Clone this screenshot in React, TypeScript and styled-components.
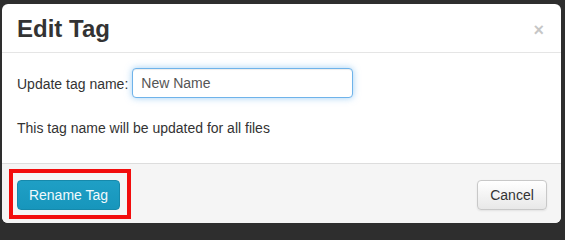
import React, { FC, useEffect, useRef } from 'react';
import styled, { createGlobalStyle } from 'styled-components';

const GlobalStyle = createGlobalStyle`
  html, body {
    margin: 0;
    padding: 0;
    background: #2e2e2e;
    overflow: hidden;
  }
  body {
    font-family: 'Liberation Sans', Arial, sans-serif;
    font-size: 14px;
    color: #333;
  }
`;

const Backdrop = styled.div`
  height: 229px;
  box-sizing: border-box;
  padding: 4px 4px 6px 2px;
`;

const Modal = styled.div`
  width: 559px;
  height: 219px;
  background: #fff;
  border-radius: 6px;
  display: flex;
  flex-direction: column;
  overflow: hidden;
`;

const Header = styled.div`
  height: 48px;
  padding: 0 15px;
  display: flex;
  align-items: center;
  justify-content: space-between;
  border-bottom: 1px solid #e5e5e5;
`;

const Title = styled.h3`
  margin: 2px 0 0 0;
  font-size: 24px;
  font-weight: bold;
  line-height: 30px;
  color: #333;
`;

const Close = styled.button`
  border: 0;
  background: none;
  padding: 0;
  margin: 4px 2px 0 0;
  font-family: 'Liberation Sans', Arial, sans-serif;
  font-size: 18px;
  font-weight: bold;
  line-height: 18px;
  color: #000;
  opacity: 0.22;
  cursor: pointer;
`;

const Body = styled.div`
  flex: 1;
  padding: 15px 15px 0 15px;
`;

const FieldRow = styled.div`
  display: flex;
  align-items: center;
  gap: 4px;
`;

const Label = styled.label`
  line-height: 20px;
  padding-top: 2px;
`;

const TextInput = styled.input`
  box-sizing: border-box;
  width: 221px;
  height: 30px;
  padding: 4px 8px;
  font-family: 'Liberation Sans', Arial, sans-serif;
  font-size: 14px;
  color: #555;
  border: 1px solid #6fb3ea;
  border-radius: 4px;
  box-shadow: inset 0 1px 1px rgba(0, 0, 0, 0.075), 0 0 7px rgba(82, 168, 236, 0.55);
  outline: none;
  caret-color: #000;
`;

const Note = styled.p`
  margin: 20px 0 0 0;
  line-height: 20px;
`;

const Footer = styled.div`
  height: 60px;
  box-sizing: border-box;
  padding: 16px 14px 0 15px;
  background: #f5f5f5;
  border-top: 1px solid #dddddd;
  display: flex;
  align-items: flex-start;
  justify-content: space-between;
`;

const Highlight = styled.span`
  position: relative;
  display: inline-flex;

  &::after {
    content: '';
    position: absolute;
    left: -8px;
    right: -11px;
    top: -11px;
    bottom: -9px;
    border: 4px solid #f20d0d;
    pointer-events: none;
  }
`;

const Button = styled.button<{ $primary?: boolean }>`
  box-sizing: border-box;
  height: 30px;
  padding: 0 4px;
  white-space: nowrap;
  font-family: 'Liberation Sans', Arial, sans-serif;
  font-size: 14px;
  line-height: 28px;
  border-radius: 4px;
  cursor: pointer;
  color: ${(p) => (p.$primary ? '#f2fafd' : '#333')};
  background: ${(p) =>
    p.$primary
      ? 'linear-gradient(#1f9fc5, #1796bc)'
      : 'linear-gradient(#ffffff, #e8e8e8)'};
  border: 1px solid ${(p) => (p.$primary ? '#1689ab' : '#c8c8c8')};
  box-shadow: ${(p) =>
    p.$primary ? 'none' : 'inset 0 1px 0 rgba(255,255,255,0.3), 0 1px 2px rgba(0,0,0,0.08)'};
`;

const RenameButton = styled(Button)`
  width: 103px;
`;

const CancelButton = styled(Button)`
  width: 70px;
`;

const App: FC = () => {
  const inputRef = useRef<HTMLInputElement>(null);

  useEffect(() => {
    const el = inputRef.current;
    if (!el) return;
    el.focus();
    el.setSelectionRange(el.value.length, el.value.length);
  }, []);

  return (
    <>
      <GlobalStyle />
      <Backdrop>
        <Modal>
          <Header>
            <Title>Edit Tag</Title>
            <Close aria-label='Close'>×</Close>
          </Header>
          <Body>
            <FieldRow>
              <Label htmlFor='tag-name'>Update tag name:</Label>
              <TextInput id='tag-name' ref={inputRef} defaultValue='New Name' />
            </FieldRow>
            <Note>This tag name will be updated for all files</Note>
          </Body>
          <Footer>
            <Highlight>
              <RenameButton $primary>Rename Tag</RenameButton>
            </Highlight>
            <CancelButton>Cancel</CancelButton>
          </Footer>
        </Modal>
      </Backdrop>
    </>
  );
};

export default App;
